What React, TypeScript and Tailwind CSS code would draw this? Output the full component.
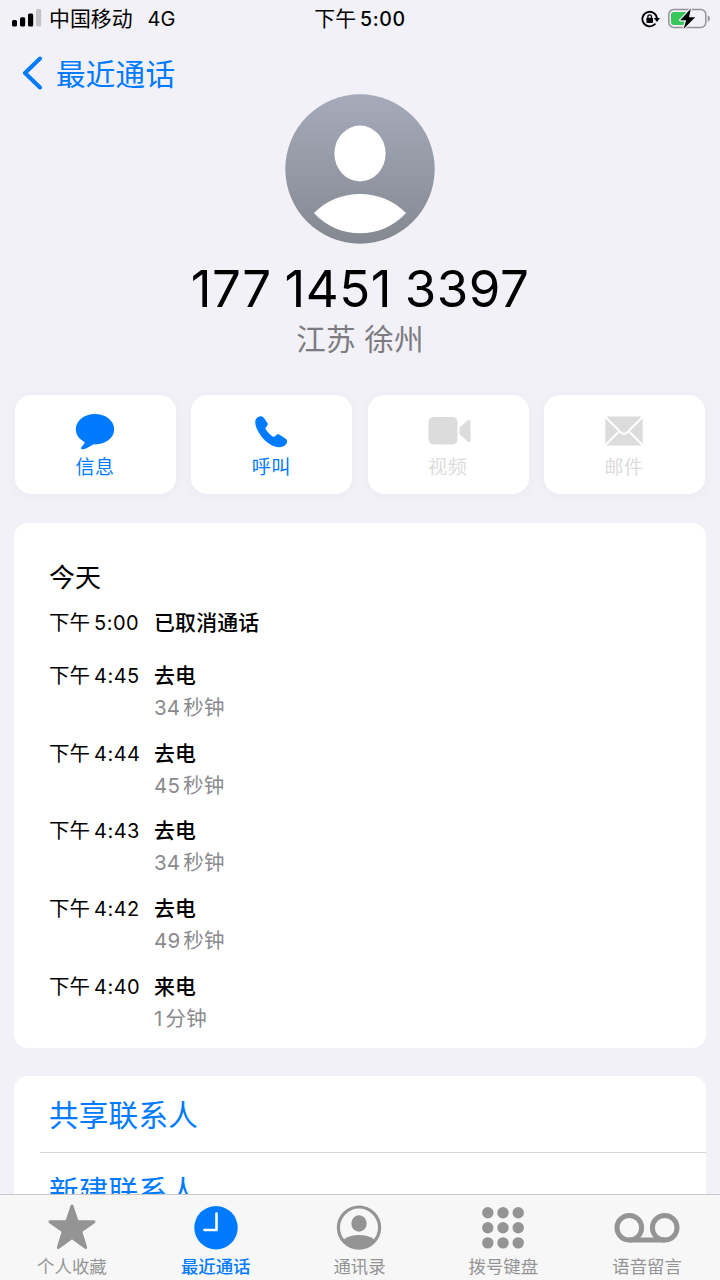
import type { ReactNode } from "react";

type Call = { time: string; kind: string; length?: string };

const calls: Call[] = [
  { time: "4:45", kind: "去电", length: "34 秒钟" },
  { time: "4:44", kind: "去电", length: "45 秒钟" },
  { time: "4:43", kind: "去电", length: "34 秒钟" },
  { time: "4:42", kind: "去电", length: "49 秒钟" },
  { time: "4:40", kind: "来电", length: "1 分钟" },
];

function SignalIcon() {
  return (
    <svg width="30" height="20" viewBox="0 0 30 20">
      <rect x="0" y="11" width="5" height="6.5" rx="1.5" />
      <rect x="8" y="8.3" width="5.2" height="9.2" rx="1.5" />
      <rect x="16" y="4.5" width="5.2" height="13" rx="1.5" />
      <rect x="24" y="0" width="5.2" height="17.5" rx="1.5" fill="#c4c4c8" />
    </svg>
  );
}

function RotationLockIcon() {
  return (
    <svg width="20" height="18" viewBox="0 0 20 18">
      <path d="M13.9 14.2A7.3 7.3 0 1 1 16 9" fill="none" stroke="#000" strokeWidth="1.8" strokeLinecap="round" />
      <path d="M12.8 8H19L15.9 12Z" />
      <rect x="5.4" y="7.8" width="6.6" height="5.2" rx="0.8" />
      <path d="M6.9 8.4V6.6a1.8 1.8 0 0 1 3.6 0v1.8" fill="none" stroke="#000" strokeWidth="1.3" />
    </svg>
  );
}

function BatteryIcon() {
  return (
    <svg width="44" height="22" viewBox="0 0 44 22">
      <rect x="0.8" y="1.6" width="37" height="17.8" rx="5" fill="none" stroke="#929297" strokeWidth="1.5" />
      <path d="M39.8 7.4c2.8.9 2.8 5.3 0 6.2z" fill="#929297" />
      <path d="M6 4H18V17H6a3 3 0 0 1-3-3V7a3 3 0 0 1 3-3Z" fill="#35c759" />
      <path d="M22.8.8 12.2 12.2H18.2L15.5 21 27.2 9.2H21Z" fill="#000" stroke="#f2f1f7" strokeWidth="2.4" paintOrder="stroke" strokeLinejoin="round" />
    </svg>
  );
}

function Avatar() {
  return (
    <svg width="150" height="150" viewBox="0 0 150 150">
      <defs>
        <linearGradient id="avatar" x1="0" y1="0" x2="0" y2="1">
          <stop offset="0" stopColor="#a5abba" />
          <stop offset="1" stopColor="#848891" />
        </linearGradient>
      </defs>
      <circle cx="75" cy="75" r="74.7" fill="url(#avatar)" />
      <ellipse cx="75" cy="59.5" rx="25.6" ry="28" fill="#fff" />
      <path d="M29 119C53 93.5 97 93.5 121 119C97 146 53 146 29 119Z" fill="#fff" />
    </svg>
  );
}

function Action({ label, enabled, children }: { label: string; enabled?: boolean; children: ReactNode }) {
  return (
    <button
      className={`flex h-[99px] flex-1 flex-col items-center rounded-[16px] bg-white pt-[17px] shadow-[0_2px_14px_rgba(0,0,0,0.035)] ${
        enabled ? "text-[#007aff]" : "text-[#dcdcdc]"
      }`}
    >
      <span className="flex h-[40px] items-center justify-center">{children}</span>
      <span className="mt-[2px] mr-[1px] h-[28px] text-[19px] leading-[28px] tracking-[0.6px]">{label}</span>
    </button>
  );
}

function Tab({ label, active, children }: { label: string; active?: boolean; children: ReactNode }) {
  return (
    <button className={`flex flex-1 flex-col items-center ${active ? "font-medium text-[#007aff]" : "text-[#949494]"}`}>
      <span className="flex h-[61px] items-center justify-center pt-[4px]">{children}</span>
      <span className="text-[17.4px] leading-[22px]">{label}</span>
    </button>
  );
}

export default function App() {
  return (
    <div className="flex h-[1280px] w-[720px] flex-col overflow-hidden bg-[#f2f1f7] font-['Inter','Noto_Sans_CJK_SC',sans-serif] text-black">
      <main className="flex min-h-0 flex-1 flex-col overflow-hidden">
        <header className="grid h-[37px] shrink-0 grid-cols-3 items-center pr-[8px] pl-[12px] text-[20px]">
          <div className="flex items-center">
            <SignalIcon />
            <span className="ml-[7px] text-[20.9px] leading-[30px]">中国移动</span>
            <span className="ml-[15px] text-[20px] leading-[30px]">4G</span>
          </div>
          <div className="flex items-baseline justify-center pr-[4px] leading-[30px]">
            <span className="text-[20.9px]">下午</span>
            <span className="ml-[4px] text-[19.5px] font-medium tracking-[0.6px]">5:00</span>
          </div>
          <div className="flex items-center justify-end gap-[7px]">
            <RotationLockIcon />
            <BatteryIcon />
          </div>
        </header>

        <nav className="flex h-[57px] shrink-0 items-start pl-[22px] text-[#007aff]">
          <svg className="mt-[19px]" width="22" height="34" viewBox="0 0 22 34">
            <path d="M18 2.5 3 17 18 31.5" fill="none" stroke="currentColor" strokeWidth="4" strokeLinecap="round" strokeLinejoin="round" />
          </svg>
          <span className="mt-[17px] ml-[12px] text-[29.6px] leading-[40px] tracking-[0.2px]">最近通话</span>
        </nav>

        <section className="flex shrink-0 flex-col items-center">
          <Avatar />
          <h1 className="mt-[15px] text-[51px] leading-[60px] font-normal tracking-[0.5px] whitespace-nowrap [word-spacing:-2px]">177 1451 3397</h1>
          <p className="text-[29.6px] leading-[40px] tracking-[0.2px] text-[#7c7c80]">江苏 徐州</p>
        </section>

        <section className="mt-[36px] flex shrink-0 gap-[15.3px] px-[15px]">
          <Action label="信息" enabled>
            <svg className="mr-[1px] mb-[1px]" width="40" height="38" viewBox="0 0 40 38" fill="currentColor">
              <path d="M20 1C9.200 1 .8 7.700.8 16.300c0 5 2.900 9.400 8 12.100.9.500 1.100 1 .7 1.700-.6 1.400-1.700 2.700-3 3.900-.9.900-.6 2.300.9 2.300 3.500 0 7.500-3.200 10.700-4.900.6-.1 1.200 0 1.900 0 10.900 0 19.200-6.400 19.200-15.100S30.800 1 20 1Z" />
            </svg>
          </Action>
          <Action label="呼叫" enabled>
            <svg className="mr-[2px]" width="34" height="34" viewBox="0 0 34 34" fill="currentColor">
              <path d="M1.200 7C1.200 4 3 2.200 5.500 1.400 7.500.8 9 1.400 10.200 3.200L13.200 7.800C14.200 9.300 13.900 10.300 12.600 11.500 11.200 12.600 11.200 13.600 12 14.800 13.600 17.200 15.800 19.400 18.200 21.200 19.400 22 20.400 22 21.400 21 22.800 19.300 24.200 18.700 26 19.900L31.300 23.600C33.300 25 33.500 26.800 32.500 28.600 31 31.200 28.300 32.200 25 32.200 19 32.200 12 27.500 7.500 21.500 3.500 16.300 1.200 11 1.200 7Z" />
            </svg>
          </Action>
          <Action label="视频">
            <svg className="mb-[2px] ml-[3px]" width="43" height="30" viewBox="0 0 43 30" fill="currentColor">
              <rect x="0.5" y="1" width="29" height="27.5" rx="5" />
              <path d="M31.500 11.500 39.800 4.200c1.200-1 2.700-.6 2.700 1v19.400c0 1.600-1.500 2-2.700 1L31.500 18.300Z" />
            </svg>
          </Action>
          <Action label="邮件">
            <svg className="mr-[1px] mb-[2px]" width="38" height="30" viewBox="0 0 38 30">
              <rect x="0.3" y="0.5" width="37.4" height="29" rx="2.5" fill="currentColor" />
              <path d="M0 .5 16.300 16.700Q19 19 21.700 16.700L38 .5M0 29.500 14.500 15M38 29.500 23.500 15" fill="none" stroke="#fff" strokeWidth="2" />
            </svg>
          </Action>
        </section>

        <section className="mx-[14px] mt-[29px] h-[525px] shrink-0 rounded-[14px] bg-white pt-[37px] pl-[35px]">
          <h2 className="text-[26px] leading-[36px] font-normal">今天</h2>
          <div className="mt-[11px] flex h-[32px] text-[20.9px] leading-[32px]">
            <div className="flex w-[105px] items-baseline">
              <span className="text-[20.5px]">下午</span>
              <span className="ml-[4px] text-[20px] tracking-[0.5px]">5:00</span>
            </div>
            <span className="font-medium tracking-[0.2px]">已取消通话</span>
          </div>
          <div className="mt-[21.3px]">
            {calls.map((call) => (
              <div key={call.time} className="flex h-[77.6px] text-[20.9px] leading-[32px]">
                <div className="flex w-[105px] items-baseline self-start">
                  <span className="text-[20.5px]">下午</span>
                  <span className="ml-[4px] text-[20px] tracking-[0.5px]">{call.time}</span>
                </div>
                <div className="flex flex-col">
                  <span className="font-medium">{call.kind}</span>
                  <span className="text-[20.5px] tracking-[0.2px] text-[#8a8a8e] [word-spacing:-3px]">{call.length}</span>
                </div>
              </div>
            ))}
          </div>
        </section>

        <section className="mx-[14px] mt-[28px] shrink-0 rounded-[14px] bg-white text-[29.6px] tracking-[0.2px] text-[#007aff]">
          <div className="ml-[26px] h-[77px] border-b border-[#d8d8dc] pl-[9px] leading-[78px]">共享联系人</div>
          <div className="ml-[26px] h-[77px] pl-[9px] leading-[76px]">新建联系人</div>
        </section>
      </main>

      <footer className="flex h-[86px] shrink-0 border-t border-[#c9c9cc] bg-[#f7f7f8] pr-[1px]">
        <Tab label="个人收藏">
          <svg className="mb-[2px]" width="50" height="48" viewBox="0 0 50 48" fill="currentColor">
            <path d="M25 3 30.200 18.700H47L33.600 28.200 38.700 44.500 25 34.600 11.300 44.500 16.400 28.200 3 18.700H19.800Z" stroke="currentColor" strokeWidth="3" strokeLinejoin="round" />
          </svg>
        </Tab>
        <Tab label="最近通话" active>
          <svg width="44" height="44" viewBox="0 0 44 44">
            <circle cx="22" cy="21.7" r="21.7" fill="currentColor" />
            <path d="M22.500 7.500V24H10.500" fill="none" stroke="#fff" strokeWidth="2.6" strokeLinecap="round" strokeLinejoin="round" />
          </svg>
        </Tab>
        <Tab label="通讯录">
          <svg width="46" height="46" viewBox="0 0 46 46">
            <clipPath id="contactDisc">
              <circle cx="23" cy="22.6" r="21" />
            </clipPath>
            <circle cx="23" cy="22.6" r="20.6" fill="none" stroke="currentColor" strokeWidth="3.2" />
            <ellipse cx="23" cy="18.5" rx="7.7" ry="8.3" fill="currentColor" />
            <ellipse cx="23" cy="44.6" rx="21" ry="14.7" fill="currentColor" clipPath="url(#contactDisc)" />
          </svg>
        </Tab>
        <Tab label="拨号键盘">
          <svg width="42" height="42" viewBox="0 0 42 42" fill="currentColor">
            {[5.7, 20.7, 35.9].map((y) => [5.8, 21, 36.2].map((x) => <circle key={`${x}-${y}`} cx={x} cy={y} r="5.7" />))}
          </svg>
        </Tab>
        <Tab label="语音留言">
          <svg width="66" height="30" viewBox="0 0 66 30" fill="none" stroke="currentColor" strokeWidth="5">
            <circle cx="15.3" cy="14.8" r="12.3" />
            <circle cx="50.7" cy="14.8" r="12.3" />
            <path d="M15.300 27.100H50.700" />
          </svg>
        </Tab>
      </footer>
    </div>
  );
}
